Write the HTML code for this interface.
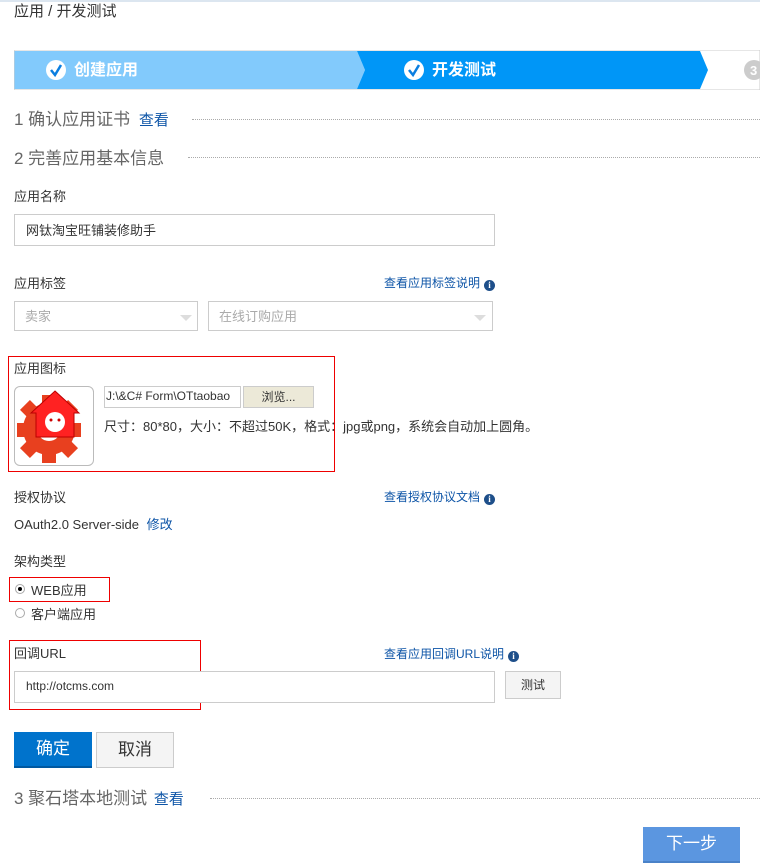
<!DOCTYPE html>
<html><head><meta charset="utf-8"><style>
*{margin:0;padding:0;box-sizing:border-box}
body{width:760px;height:865px;overflow:hidden;background:#fff;font-family:"Liberation Sans","Noto Sans CJK SC",sans-serif;color:#333;font-size:13px;position:relative}
.a{position:absolute;white-space:nowrap}
.lnk{color:#0e55a7}
.h{font-size:17px;color:#666}
.dot{position:absolute;border-top:1px dotted #aaa;height:0;right:0}
.box{position:absolute;border:1px solid #ccc;background:#fff}
.red{position:absolute;border:1px solid #e00}
.info{display:inline-block;width:11px;height:11px;border-radius:50%;background:#1e4f8a;color:#fff;font-size:9px;line-height:11px;text-align:center;font-weight:bold;vertical-align:-1px;margin-left:4px;font-family:"Liberation Serif",serif}
.tri{position:absolute;width:0;height:0;border-left:6px solid transparent;border-right:6px solid transparent;border-top:6px solid #ddd}
</style></head><body>
<div class="a" style="left:0;top:0;width:760px;height:2px;background:#dce6f0"></div>
<div class="a" style="left:14px;top:0px;font-size:15px;color:#333">应用 / 开发测试</div>

<svg class="a" style="left:14px;top:50px" width="746" height="40">
<rect x="0" y="0" width="746" height="40" fill="#fff" stroke="#ccc"/>
<polygon points="0.5,1 343,1 351,20 343,39 0.5,39" fill="#82cafc"/>
<polygon points="343,1 686,1 694,20 686,39 343,39 351,20" fill="#0096f7"/>
<circle cx="42" cy="20" r="10" fill="#fff"/><path d="M37 20 l4 5 l6 -10" stroke="#0a7ee0" stroke-width="2.5" fill="none"/>
<circle cx="400" cy="20" r="10" fill="#fff"/><path d="M395 20 l4 5 l6 -10" stroke="#0a7ee0" stroke-width="2.5" fill="none"/>
<circle cx="740" cy="20" r="10" fill="#ccc"/>
<text x="736" y="25" fill="#fff" font-size="13" font-weight="bold" font-family="Liberation Sans">3</text>
<text x="60" y="25" fill="#fff" font-size="16" font-weight="bold" font-family="Liberation Sans,Noto Sans CJK SC">创建应用</text>
<text x="418" y="25" fill="#fff" font-size="16" font-weight="bold" font-family="Liberation Sans,Noto Sans CJK SC">开发测试</text>
</svg>

<div class="a h" style="left:14px;top:105px">1 确认应用证书 <span class="lnk" style="font-size:15px;margin-left:4px">查看</span></div>
<div class="dot" style="left:192px;top:119px"></div>
<div class="a h" style="left:14px;top:144px">2 完善应用基本信息</div>
<div class="dot" style="left:188px;top:157px"></div>

<div class="a" style="left:14px;top:186px">应用名称</div>
<div class="box" style="left:14px;top:214px;width:481px;height:32px"></div>
<div class="a" style="left:26px;top:220px">网钛淘宝旺铺装修助手</div>

<div class="a" style="left:14px;top:273px">应用标签</div>
<div class="a lnk" style="left:384px;top:274px;font-size:12px">查看应用标签说明<span class="info">i</span></div>
<div class="box" style="left:14px;top:301px;width:184px;height:30px"></div>
<div class="a" style="left:25px;top:306px;color:#aaa">卖家</div>
<div class="tri" style="left:180px;top:315px"></div>
<div class="box" style="left:208px;top:301px;width:285px;height:30px"></div>
<div class="a" style="left:219px;top:306px;color:#aaa">在线订购应用</div>
<div class="tri" style="left:474px;top:315px"></div>

<div class="red" style="left:8px;top:356px;width:327px;height:116px"></div>
<div class="a" style="left:14px;top:358px">应用图标</div>
<div class="box" style="left:14px;top:386px;width:80px;height:80px;border-color:#bbb;border-radius:6px;overflow:hidden">
<svg width="78" height="78">
<g fill="#e8401f">
<circle cx="34" cy="42" r="26"/>
<rect x="2" y="36" width="64" height="14" transform="rotate(0 34 42)"/>
<rect x="27" y="8" width="14" height="68"/>
<rect x="27" y="8" width="14" height="68" transform="rotate(45 34 42)"/>
<rect x="27" y="8" width="14" height="68" transform="rotate(-45 34 42)"/>
</g>
<circle cx="34" cy="42" r="12" fill="#fff"/>
<polygon points="40,4 64,26 59,26 59,50 21,50 21,26 16,26" fill="#f22" stroke="#b00"/>
<circle cx="40" cy="35" r="10" fill="#fff"/><circle cx="36" cy="33" r="1.5" fill="#c00"/><circle cx="44" cy="33" r="1.5" fill="#c00"/>
</svg></div>
<div class="box" style="left:104px;top:386px;width:137px;height:22px;overflow:hidden;font-size:12px;padding:2px 0 0 1px">J:\&amp;C# Form\OTtaobao</div>
<div class="a" style="left:243px;top:386px;width:71px;height:22px;background:#ece9d8;border:1px solid #ccc;text-align:center;line-height:20px;font-size:12px">浏览...</div>
<div class="a" style="left:104px;top:416px">尺寸：80*80，大小：不超过50K，格式：jpg或png，系统会自动加上圆角。</div>

<div class="a" style="left:14px;top:487px">授权协议</div>
<div class="a lnk" style="left:384px;top:488px;font-size:12px">查看授权协议文档<span class="info">i</span></div>
<div class="a" style="left:14px;top:514px">OAuth2.0 Server-side <span class="lnk" style="margin-left:4px">修改</span></div>

<div class="a" style="left:14px;top:551px">架构类型</div>
<div class="red" style="left:9px;top:577px;width:101px;height:25px"></div>
<div class="a" style="left:15px;top:584px;width:10px;height:10px;border:1px solid #aaa;border-radius:50%"><div style="width:4px;height:4px;background:#000;border-radius:50%;margin:2px"></div></div>
<div class="a" style="left:31px;top:580px">WEB应用</div>
<div class="a" style="left:15px;top:608px;width:10px;height:10px;border:1px solid #aaa;border-radius:50%"></div>
<div class="a" style="left:31px;top:604px">客户端应用</div>

<div class="red" style="left:9px;top:640px;width:192px;height:70px"></div>
<div class="a" style="left:14px;top:643px">回调URL</div>
<div class="a lnk" style="left:384px;top:645px;font-size:12px">查看应用回调URL说明<span class="info">i</span></div>
<div class="box" style="left:14px;top:671px;width:481px;height:32px"></div>
<div class="a" style="left:26px;top:679px;font-size:12px">http://otcms.com</div>
<div class="a" style="left:505px;top:671px;width:56px;height:28px;background:#f4f4f4;border:1px solid #ccc;text-align:center;line-height:26px;font-size:12px">测试</div>

<div class="a" style="left:14px;top:732px;width:78px;height:36px;background:#0073cc;border-bottom:2px solid #0058a0;color:#fff;font-size:17px;text-align:center;line-height:34px">确定</div>
<div class="a" style="left:96px;top:732px;width:78px;height:36px;background:#f4f4f4;border:1px solid #ccc;color:#333;font-size:17px;text-align:center;line-height:34px">取消</div>

<div class="a h" style="left:14px;top:784px">3 聚石塔本地测试 <span class="lnk" style="font-size:15px;margin-left:2px">查看</span></div>
<div class="dot" style="left:210px;top:798px"></div>

<div class="a" style="left:643px;top:827px;width:97px;height:36px;background:#5b96e0;border-bottom:2px solid #4a82c8;color:#fff;font-size:17px;text-align:center;line-height:34px">下一步</div>
</body></html>
